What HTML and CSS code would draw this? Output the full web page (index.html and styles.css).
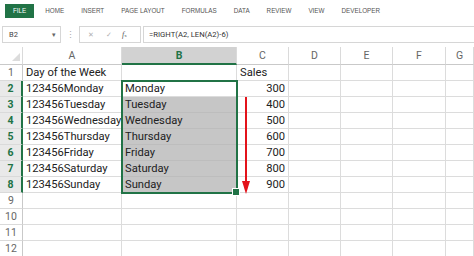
FILE: index.html
```html
<!DOCTYPE html>
<html lang="en">
<head>
    <meta charset="UTF-8">
    <title>Sales - Excel</title>
    <link rel="stylesheet" href="styles.css">
</head>
<body>
    <div class="tabs">
        <span class="tab file">FILE</span>
        <span class="tab">HOME</span>
        <span class="tab">INSERT</span>
        <span class="tab">PAGE LAYOUT</span>
        <span class="tab">FORMULAS</span>
        <span class="tab">DATA</span>
        <span class="tab">REVIEW</span>
        <span class="tab">VIEW</span>
        <span class="tab">DEVELOPER</span>
    </div>

    <div class="fbar">
        <div class="namebox"><span>B2</span><span class="caret">&#9662;</span></div>
        <div class="grip">&#8942;</div>
        <div class="fx-btns">
            <span class="x">&#10005;</span>
            <span class="ok">&#10003;</span>
            <span class="fx"><i>f</i><small>x</small></span>
        </div>
        <div class="formula">=RIGHT(A2, LEN(A2)-6)</div>
    </div>

    <div class="sheet">
        <div class="hd corner"></div><div class="hd">A</div><div class="hd hsel">B</div><div class="hd">C</div><div class="hd">D</div><div class="hd">E</div><div class="hd">F</div><div class="hd">G</div>

        <div class="rh">1</div><div class="c">Day of the Week</div><div class="c"></div><div class="c">Sales</div><div class="c"></div><div class="c"></div><div class="c"></div><div class="c"></div>
        <div class="rh rsel">2</div><div class="c">123456Monday</div><div class="c">Monday</div><div class="c num">300</div><div class="c"></div><div class="c"></div><div class="c"></div><div class="c"></div>
        <div class="rh rsel">3</div><div class="c">123456Tuesday</div><div class="c sel">Tuesday</div><div class="c num">400</div><div class="c"></div><div class="c"></div><div class="c"></div><div class="c"></div>
        <div class="rh rsel">4</div><div class="c">123456Wednesday</div><div class="c sel">Wednesday</div><div class="c num">500</div><div class="c"></div><div class="c"></div><div class="c"></div><div class="c"></div>
        <div class="rh rsel">5</div><div class="c">123456Thursday</div><div class="c sel">Thursday</div><div class="c num">600</div><div class="c"></div><div class="c"></div><div class="c"></div><div class="c"></div>
        <div class="rh rsel">6</div><div class="c">123456Friday</div><div class="c sel">Friday</div><div class="c num">700</div><div class="c"></div><div class="c"></div><div class="c"></div><div class="c"></div>
        <div class="rh rsel">7</div><div class="c">123456Saturday</div><div class="c sel">Saturday</div><div class="c num">800</div><div class="c"></div><div class="c"></div><div class="c"></div><div class="c"></div>
        <div class="rh rsel">8</div><div class="c">123456Sunday</div><div class="c sel">Sunday</div><div class="c num">900</div><div class="c"></div><div class="c"></div><div class="c"></div><div class="c"></div>
        <div class="rh">9</div><div class="c"></div><div class="c"></div><div class="c"></div><div class="c"></div><div class="c"></div><div class="c"></div><div class="c"></div>
        <div class="rh">10</div><div class="c"></div><div class="c"></div><div class="c"></div><div class="c"></div><div class="c"></div><div class="c"></div><div class="c"></div>
        <div class="rh">11</div><div class="c"></div><div class="c"></div><div class="c"></div><div class="c"></div><div class="c"></div><div class="c"></div><div class="c"></div>
        <div class="rh">12</div><div class="c"></div><div class="c"></div><div class="c"></div><div class="c"></div><div class="c"></div><div class="c"></div><div class="c"></div>

        <!-- selection frame B2:B8 and the fill arrow, laid over the cells -->
        <div class="selbox"></div>
        <svg class="arrow" width="10" height="98" viewBox="0 0 10 98">
            <line x1="5" y1="0" x2="5" y2="86" stroke="#e3131b" stroke-width="2"/>
            <polygon points="1,84 9,84 5,97" fill="#e3131b"/>
        </svg>
    </div>
</body>
</html>
```

FILE: styles.css
```css
* {
    box-sizing: border-box;
}

body {
    margin: 0;
    width: 474px;
    height: 256px;
    overflow: hidden;
    background: #fff;
    color: #222;
    font-family: Roboto, "Liberation Sans", sans-serif;
}

/* ribbon tabs */
.tabs {
    display: flex;
    align-items: center;
    height: 22px;
    padding-left: 5px;
    font-family: "Liberation Sans", Arial, sans-serif;
    font-size: 6.3px;
}

.tab {
    padding: 0 8.5px;
    height: 14px;
    line-height: 14px;
    color: #555;
}

.tab.file {
    background: #217346;
    color: #fff;
    padding: 0 8px;
    margin-right: 2.5px;
}

/* formula bar */
.fbar {
    display: flex;
    align-items: center;
    height: 25px;
    padding-left: 2px;
}

.namebox {
    display: flex;
    justify-content: space-between;
    align-items: center;
    width: 59px;
    height: 17px;
    padding: 0 4px 0 6px;
    border: 1px solid #d6d6d6;
    font-size: 7.5px;
    color: #444;
}

.caret {
    font-size: 7px;
    color: #666;
}

.grip {
    width: 18px;
    text-align: center;
    font-size: 9px;
    color: #aaa;
}

.fx-btns {
    display: flex;
    align-items: center;
    width: 62px;
    height: 17px;
    border: 1px solid #d6d6d6;
    font-size: 7px;
    color: #b0b0b0;
}

.fx-btns .x {
    margin-left: 8px;
}

.fx-btns .ok {
    margin-left: 12px;
}

.fx-btns .fx {
    margin-left: 10px;
    color: #555;
    font-family: "Liberation Serif", serif;
    font-size: 8px;
}

.fx small {
    font-size: 5px;
}

.formula {
    flex: 1;
    height: 17px;
    margin-left: 2px;
    padding-left: 5px;
    border: 1px solid #d6d6d6;
    border-right: none;
    line-height: 15px;
    font-size: 7.7px;
    color: #333;
}

/* worksheet grid */
.sheet {
    position: relative;
    display: grid;
    grid-template-columns: 23px 99px 115px 52px 52px 52px 53px 1fr;
    grid-template-rows: 18px repeat(12, 16px);
}

.hd {
    border-right: 1px solid #dadada;
    border-bottom: 1px solid #c9c9c9;
    text-align: center;
    line-height: 17px;
    font-size: 10.5px;
    color: #666;
}

.hd.corner {
    position: relative;
}

.hd.corner::after {
    content: "";
    position: absolute;
    right: 2px;
    bottom: 3px;
    border-left: 8px solid transparent;
    border-bottom: 8px solid #dcdcdc;
}

.hd.hsel {
    background: #d2d2d2;
    color: #217346;
    font-weight: bold;
    border-bottom: 2px solid #217346;
}

.rh {
    border-right: 1px solid #c9c9c9;
    border-bottom: 1px solid #dadada;
    text-align: center;
    line-height: 15px;
    font-size: 10.5px;
    color: #666;
}

.rh.rsel {
    background: #e9e9e9;
    color: #217346;
    font-weight: bold;
    border-right: 2px solid #217346;
}

.c {
    border-right: 1px solid #dcdcdc;
    border-bottom: 1px solid #dcdcdc;
    padding: 0 3px;
    line-height: 16px;
    font-size: 11.2px;
    white-space: nowrap;
}

.c.num {
    text-align: right;
}

.c.sel {
    background: #c6c6c6;
    border-bottom-color: #bdbdbd;
}

.selbox {
    position: absolute;
    left: 121px;
    top: 33px;
    width: 117px;
    height: 114px;
    border: 2px solid #217346;
}

.selbox::after {
    content: "";
    position: absolute;
    right: -4px;
    bottom: -4px;
    width: 6px;
    height: 6px;
    background: #217346;
    border: 1px solid #fff;
}

.arrow {
    position: absolute;
    left: 241px;
    top: 50px;
    overflow: visible;
}
```
